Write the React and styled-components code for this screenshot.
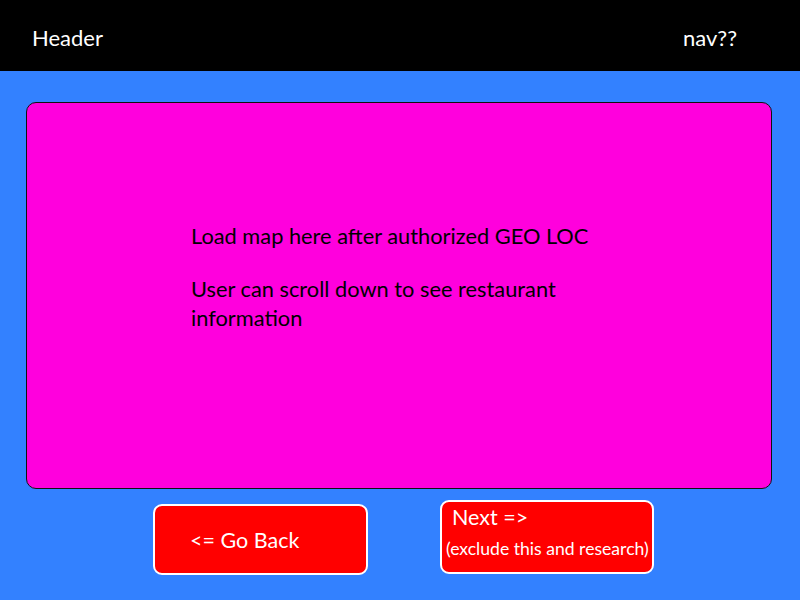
import styled, { createGlobalStyle } from "styled-components"

const GlobalStyle = createGlobalStyle`
    html, body {
        margin: 0;
        padding: 0;
        background: #3381ff;
    }
    * {
        box-sizing: border-box;
    }
`

const Page = styled.div`
    width: 800px;
    height: 600px;
    background: #3381ff;
    font-family: Lato, "Open Sans", sans-serif;
    overflow: hidden;
`

const Header = styled.header`
    height: 71px;
    background: #000;
    color: #fff;
    display: flex;
    align-items: center;
    justify-content: space-between;
    padding: 4px 63px 0 32px;
    font-size: 22px;
`

const Main = styled.main`
    padding: 31px 28px 0 26px;
`

const MapPanel = styled.section`
    height: 387px;
    background: #ff00dd;
    border: 1.5px solid #111;
    border-radius: 10px;
    padding: 118px 0 0 164px;
    color: #000;
    font-size: 21.8px;
    line-height: 29px;

    p {
        margin: 0 0 24px;
        max-width: 420px;
    }
`

const ButtonRow = styled.div`
    display: flex;
    align-items: flex-start;
    gap: 72px;
    padding: 11px 0 0 153px;
`

const NavButton = styled.button`
    width: ${(props) => props.$width}px;
    height: ${(props) => props.$height}px;
    margin-top: ${(props) => props.$offset || 0}px;
    background: #ff0000;
    color: #fff;
    border: 2px solid #fff;
    border-radius: 9px;
    font-family: inherit;
    display: flex;
    flex-direction: column;
    align-items: flex-start;
    justify-content: ${(props) => (props.$top ? "flex-start" : "center")};
    padding: ${(props) => (props.$top ? 1 : 0)}px 0 0 ${(props) => props.$pad}px;
    cursor: pointer;
`

const BigLabel = styled.span`
    font-size: 21.5px;
    line-height: 28px;
`

const SmallLabel = styled.span`
    font-size: 17.6px;
    line-height: 24px;
    margin: 6px 0 0 -6px;
    white-space: nowrap;
`

function App() {
    return (
        <>
            <GlobalStyle />
            <Page>
                <Header>
                    <span>Header</span>
                    <span>nav??</span>
                </Header>
                <Main>
                    <MapPanel>
                        <p>Load map here after authorized GEO LOC</p>
                        <p>User can scroll down to see restaurant information</p>
                    </MapPanel>
                </Main>
                <ButtonRow>
                    <NavButton $width={215} $height={71} $offset={4} $pad={35}>
                        <BigLabel>&lt;= Go Back</BigLabel>
                    </NavButton>
                    <NavButton $width={214} $height={74} $pad={10} $top>
                        <BigLabel>Next =&gt;</BigLabel>
                        <SmallLabel>(exclude this and research)</SmallLabel>
                    </NavButton>
                </ButtonRow>
            </Page>
        </>
    )
}

export default App
